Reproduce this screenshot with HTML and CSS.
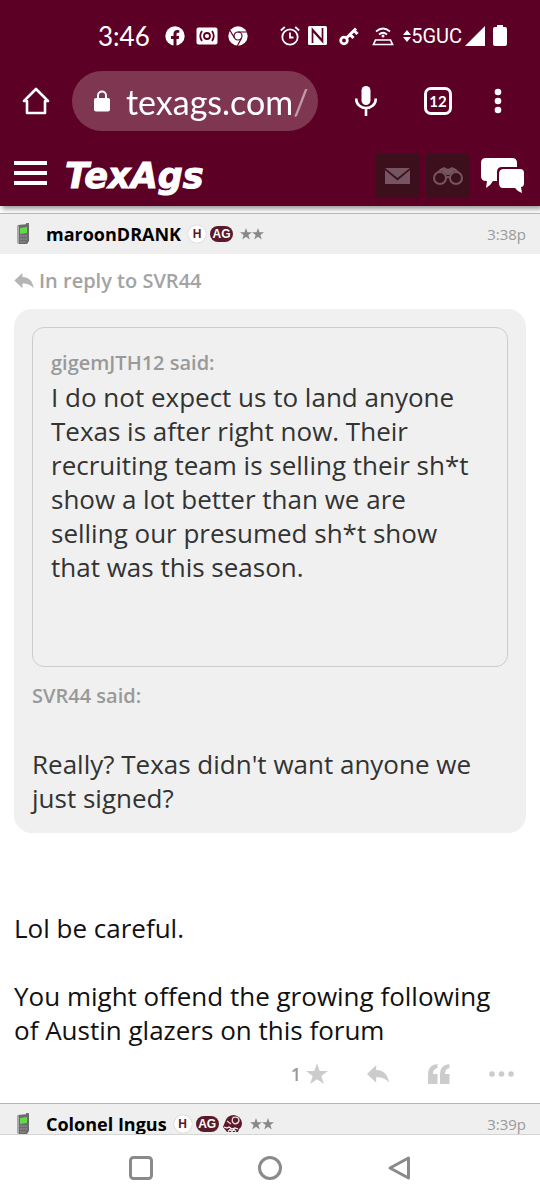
FILE: index.html
```html
<!DOCTYPE html>
<html lang="en">
<head>
	<title>TexAgs</title>
	<meta charset="utf-8">
	<meta name="viewport" content="width=device-width, initial-scale=1">
	<link rel="stylesheet" href="styles.css">
</head>
<body>
	<!-- shared icons -->
	<svg class="defs" width="0" height="0">
		<symbol id="phone" viewBox="0 0 14 24">
			<path d="M10 1h3v6h-3z" fill="#777"/>
			<path d="M2 3l10-1 1 2v15l-2 3H3l-2-2V5z" fill="#6a6a6a"/>
			<path d="M1 5l2-2v19l-2-1z" fill="#aaa"/>
			<path d="M4 6l7-1v6l-7 1z" fill="#62d84a"/>
			<path d="M4 14h7M4 17h7M4 20h6" stroke="#8b8b8b" stroke-width="1.5" stroke-dasharray="2 .6"/>
		</symbol>
		<symbol id="star" viewBox="0 0 24 24">
			<path d="M12 0l2.900 8.700H24l-7.300 5.500L19.500 23 12 17.700 4.500 23l2.800-8.800L0 8.700h9.100z" fill="currentColor"/>
		</symbol>
		<symbol id="reply" viewBox="0 0 24 20">
			<path d="M10 0v5c8 0 13 5 14 14-3-4-7-6-14-6v6L0 9.500z" fill="currentColor"/>
		</symbol>
	</svg>

	<header class="top">
		<div class="status">
			<span class="clock">3:46</span>
			<svg class="fb" width="20" height="20" viewBox="0 0 20 20"><circle cx="10" cy="10" r="9.700" fill="#fff"/><path d="M8.500 20v-7H6v-3h2.500V8c0-2.600 1.500-4 3.800-4l2 .2v2.500H13c-1.200 0-1.500.7-1.500 1.500V10h2.700l-.5 3h-2.200v7z" fill="#5c0025"/></svg>
			<svg class="cast" width="22" height="18" viewBox="0 0 22 18"><rect x=".5" y=".5" width="21" height="17" rx="2" fill="#fff"/><g fill="none" stroke="#5c0025" stroke-width="1.800"><circle cx="11" cy="9" r="3"/><path d="M6 4q-3.500 5 0 10M16 4q3.500 5 0 10"/></g></svg>
			<svg class="chrome" width="20" height="20" viewBox="0 0 20 20"><circle cx="10" cy="10" r="9.700" fill="#fff"/><g fill="none" stroke="#5c0025" stroke-width="1.200"><circle cx="10" cy="10" r="4"/><path d="M10 6h9M6.500 12L2 4.500M13.500 12L9.300 20"/></g></svg>
			<svg class="alarm" width="20" height="20" viewBox="0 0 20 20" fill="none" stroke="#fff" stroke-width="1.800"><circle cx="10" cy="11" r="7.700"/><path d="M10 6.500V11.500h3.500M.8 4.500L4.800 1M19.200 4.500L15.200 1"/></svg>
			<svg class="nfc" width="19" height="19" viewBox="0 0 19 19"><rect width="19" height="19" rx="1.500" fill="#fff"/><path d="M4.500 17V3.500L14 14M14.500 2v13.500L5 5" fill="none" stroke="#5c0025" stroke-width="1.700"/></svg>
			<svg class="key" width="20" height="20" viewBox="0 0 20 20" fill="none" stroke="#fff"><circle cx="5" cy="14.500" r="3.300" stroke-width="2.800"/><path d="M7.500 12L17 2.500M11 8.500l3.500 3.500M15 4.500L18.500 8" stroke-width="3"/></svg>
			<svg class="router" width="22" height="20" viewBox="0 0 22 20" fill="none" stroke="#fff" stroke-width="1.700"><path d="M3.500 14h15l2 4.500h-19zM4 5.500q7-6 14 0M7 8.500q4-3.500 8 0"/><circle cx="11" cy="10" r="1.500" fill="#fff" stroke="none"/></svg>
			<span class="network"><svg width="8" height="12" viewBox="0 0 8 12"><path d="M4 0l4 5H0zM4 12L0 7h8z" fill="#fff"/></svg>5GUC</span>
			<svg class="signal" width="20" height="20" viewBox="0 0 20 20"><path d="M20 0v20H0z" fill="#fff"/></svg>
			<svg class="battery" width="14" height="21" viewBox="0 0 14 21"><path d="M4 0h6v2h2q2 0 2 2v15q0 2-2 2H2q-2 0-2-2V4q0-2 2-2h2z" fill="#fff"/></svg>
		</div>

		<div class="browser">
			<button class="home" aria-label="Home"><svg width="28" height="28" viewBox="0 0 28 28" fill="none" stroke="#fff" stroke-width="2.600" stroke-linejoin="round" stroke-linecap="round"><path d="M2 14L14 2l12 12h-3v12H5V14z"/></svg></button>
			<label class="address">
				<svg width="16" height="22" viewBox="0 0 16 22"><rect y="8" width="16" height="13.500" rx="2" fill="#fff"/><path d="M4 9V5.500a4 4 0 0 1 8 0V9" fill="none" stroke="#fff" stroke-width="2"/></svg>
				<input type="text" value="texags.com/" aria-label="Address">
			</label>
			<button class="mic" aria-label="Voice search"><svg width="22" height="30" viewBox="0 0 22 30"><rect x="6.500" width="9" height="19" rx="4.500" fill="#fff"/><path d="M1.300 12.500v1a9.700 8.500 0 0 0 19.400 0v-1M11 22v8" fill="none" stroke="#fff" stroke-width="2.600"/></svg></button>
			<button class="tabs" aria-label="Open tabs"><span>12</span></button>
			<button class="more" aria-label="Menu"><svg width="8" height="26" viewBox="0 0 8 26" fill="#fff"><circle cx="4" cy="4" r="3.300"/><circle cx="4" cy="13" r="3.300"/><circle cx="4" cy="22" r="3.300"/></svg></button>
		</div>

		<nav class="site">
			<button class="menu" aria-label="Site menu"><i></i><i></i><i></i></button>
			<a class="logo" href="#">TexAgs</a>
			<button class="tile" aria-label="Messages"><svg width="26" height="18" viewBox="0 0 26 18" fill="#765461"><path d="M0 1h25L12.500 11z"/><path d="M0 3l12.500 10.500L25 3v14H0z"/></svg></button>
			<button class="tile" aria-label="Watched"><svg width="30" height="20" viewBox="0 0 30 20" fill="none" stroke="#765461" stroke-width="2"><circle cx="7" cy="12" r="6"/><circle cx="23" cy="12" r="6"/><path d="M13 12q2-2 4 0"/><path d="M3 7l4-4 4-2 4 2 4-2 4 2 4 4-6-2-5 4h-2L9 5z" fill="#765461" stroke="none"/></svg></button>
			<button class="chat" aria-label="Forums"><svg width="44" height="36" viewBox="0 0 44 36" fill="#fff"><path d="M5 0h26q5 0 5 5v4H21q-5 0-5 5v9h-4q-2 4-7 7l1-7H5q-5 0-5-5V5q0-5 5-5z"/><path d="M23 11h16q4 0 4 4v10q0 4-3 4l1 6q-5-2-7-5H22q-4 0-4-5v-9q0-5 5-5z"/></svg></button>
		</nav>
	</header>

	<main>
		<article class="post">
			<div class="posthead">
				<svg class="device" width="14" height="24"><use href="#phone"/></svg>
				<a class="user" href="#">maroonDRANK</a>
				<span class="badge h">H</span>
				<span class="badge ag">AG</span>
				<span class="stars"><svg width="12" height="12"><use href="#star"/></svg><svg width="12" height="12"><use href="#star"/></svg></span>
				<time>3:38p</time>
			</div>
			<div class="content">
				<a class="inreply" href="#"><svg width="20" height="16"><use href="#reply"/></svg>In reply to SVR44</a>
				<blockquote class="quote">
					<blockquote class="inner">
						<cite>gigemJTH12 said:</cite>
						<p>I do not expect us to land anyone Texas is after right now. Their recruiting team is selling their sh*t show a lot better than we are selling our presumed sh*t show that was this season.</p>
					</blockquote>
					<cite>SVR44 said:</cite>
					<p class="answer">Really? Texas didn't want anyone we just signed?</p>
				</blockquote>
				<div class="message">
					<p>Lol be careful.</p>
					<p>You might offend the growing following of Austin glazers on this forum</p>
				</div>
			</div>
			<div class="actions">
				<button class="like">1<svg width="22" height="22"><use href="#star"/></svg></button>
				<button aria-label="Reply"><svg width="22" height="19"><use href="#reply"/></svg></button>
				<button aria-label="Quote"><svg width="22" height="20" viewBox="0 0 22 20" fill="currentColor"><path d="M9.500 0v4Q5 5 5 10h4.500v10H0V10Q0 1 9.500 0zM21.500 0v4Q17 5 17 10h4.500v10H12V10Q12 1 21.500 0z"/></svg></button>
				<button aria-label="More"><svg width="26" height="6" viewBox="0 0 26 6" fill="currentColor"><circle cx="3" cy="3" r="2.800"/><circle cx="12.500" cy="3" r="2.800"/><circle cx="22" cy="3" r="2.800"/></svg></button>
			</div>
		</article>

		<article class="post next">
			<div class="posthead">
				<svg class="device" width="14" height="24"><use href="#phone"/></svg>
				<a class="user" href="#">Colonel Ingus</a>
				<span class="badge h">H</span>
				<span class="badge ag">AG</span>
				<svg class="ring" width="20" height="18" viewBox="0 0 20 18"><path d="M2 7Q4 0 11 0q7 1 8 8 0 4-3 6l-1 3H4l-4-5z" fill="#5a1a28"/><path d="M10 2.500q6-1.500 6 3-1 4-5 3-3-2-1-6M4 6l4 3" fill="none" stroke="#e6d3d6" stroke-width="1.400"/><path d="M1 12l3 1 2-1 3 2 3-1 3 1M5 16.500l2-2 2 2 2-2 2 2" fill="none" stroke="#fff" stroke-width="1.200"/></svg>
				<span class="stars"><svg width="12" height="12"><use href="#star"/></svg><svg width="12" height="12"><use href="#star"/></svg></span>
				<time>3:39p</time>
			</div>
		</article>
	</main>

	<footer class="sysnav">
		<button aria-label="Recent apps"><svg width="26" height="26" viewBox="0 0 26 26" fill="none" stroke="#8a8a8a" stroke-width="3"><rect x="2.500" y="2.500" width="21" height="21" rx="3"/></svg></button>
		<button aria-label="Home screen"><svg width="26" height="26" viewBox="0 0 26 26" fill="none" stroke="#8a8a8a" stroke-width="3"><circle cx="13" cy="13" r="10.500"/></svg></button>
		<button aria-label="Back"><svg width="26" height="26" viewBox="0 0 26 26" fill="none" stroke="#8a8a8a" stroke-width="3" stroke-linejoin="round"><path d="M22.500 3v20L4 13z"/></svg></button>
	</footer>
</body>
</html>
```
FILE: styles.css
```css
*{
	margin:0;
	padding:0;
	box-sizing:border-box;
}
body{
	display:flex;
	flex-direction:column;
	min-height:100vh;
	background:#fff;
	color:#111;
	font-family:"Open Sans","Noto Sans",sans-serif;
	font-size:26px;
	line-height:34px;
}
a{
	color:inherit;
	text-decoration:none;
}
button{
	display:flex;
	align-items:center;
	justify-content:center;
	border:none;
	background:none;
	color:inherit;
	font:inherit;
	cursor:pointer;
}
svg{
	display:block;
	flex:none;
}
.defs{
	position:absolute;
}

/* top bars */
.top{
	background:#5c0025;
	color:#fff;
	box-shadow:2px 3px 5px rgba(0,0,0,0.4);
}
.status{
	display:flex;
	align-items:center;
	height:71px;
	padding:0 33px 0 98px;
}
.clock{
	font-family:Lato,sans-serif;
	font-size:26px;
	margin-right:auto;
}
.fb{
	margin-right:11px;
}
.cast{
	margin-right:10px;
}
.chrome{
	margin-right:32px;
}
.alarm{
	margin-right:8px;
}
.nfc{
	margin-right:12px;
}
.key{
	margin-right:13px;
}
.router{
	margin-right:9px;
}
.network{
	display:flex;
	align-items:center;
	font-family:Roboto,sans-serif;
	font-size:20px;
}
.signal{
	margin:0 8px 0 3px;
}
.browser{
	display:flex;
	height:60px;
	padding-right:18px;
}
.home,.mic,.tabs{
	width:72px;
}
.more{
	width:48px;
}
.address{
	display:flex;
	flex:1;
	align-items:center;
	gap:16px;
	min-width:0;
	margin-right:12px;
	padding:0 10px 0 22px;
	border-radius:30px;
	background:#7f3651;
}
.address input{
	flex:1;
	min-width:0;
	height:60px;
	border:none;
	outline:none;
	background:none;
	color:#fff;
	font-family:Lato,sans-serif;
	font-size:34px;
	-webkit-mask-image:linear-gradient(to left,rgba(0,0,0,0.5) 12px,#000 18px);
	mask-image:linear-gradient(to left,rgba(0,0,0,0.5) 12px,#000 18px);
}
.tabs span{
	width:28px;
	height:28px;
	border:3px solid #fff;
	border-radius:7px;
	font-family:Lato,sans-serif;
	font-size:15px;
	font-weight:700;
	line-height:22px;
}
.site{
	display:flex;
	align-items:center;
	height:75px;
	padding:14px 15px 0 14px;
}
.menu{
	flex-direction:column;
	gap:6px;
	width:33px;
	padding-bottom:6px;
}
.menu i{
	width:100%;
	height:4px;
	background:#fff;
}
.logo{
	margin:0 auto 0 18px;
	font-family:"DejaVu Sans",sans-serif;
	font-size:35px;
	font-style:italic;
	font-weight:700;
	-webkit-text-stroke:1px #fff;
}
.tile{
	width:44px;
	height:44px;
	margin-right:6px;
	background:#3b0f1b;
}
.chat{
	margin-left:5px;
}

/* posts */
.post{
	margin-top:7px;
}
.posthead{
	display:flex;
	align-items:center;
	height:41px;
	padding:0 14px 0 16px;
	border-top:1px solid #b5b5b5;
	background:#efefef;
}
.device{
	margin-right:16px;
}
.user{
	margin-right:7px;
	color:#000;
	font-size:18px;
	font-weight:700;
}
.badge{
	margin-right:4px;
	height:18px;
	border-radius:9px;
	font-family:"Liberation Sans",sans-serif;
	font-size:12px;
	font-weight:700;
	line-height:18px;
	text-align:center;
}
.h{
	width:18px;
	background:#fff;
	color:#5a1a28;
	box-shadow:0 0 1px #999;
}
.ag{
	width:23px;
	height:16px;
	background:#5a1a28;
	color:#fff;
	line-height:16px;
}
.ring{
	margin-right:4px;
}
.stars{
	display:flex;
	margin-left:3px;
	color:#888;
}
time{
	margin-left:auto;
	color:#999;
	font-size:15px;
}
.content{
	padding:10px 14px 0;
}
.inreply,cite{
	color:#999;
	font-size:20px;
	font-style:normal;
	font-weight:600;
}
.inreply{
	display:flex;
	align-items:center;
	gap:5px;
	color:#a3a3a3;
}
.inreply svg{
	color:#b5b5b5;
}
.quote{
	margin-top:11px;
	padding:18px;
	border-radius:18px;
	background:#f0f0f0;
	color:#333;
}
.inner{
	margin-bottom:12px;
	padding:18px 18px 82px;
	border:1px solid #ccc;
	border-radius:12px;
}
cite{
	display:block;
}
.answer{
	margin-top:34px;
}
.message{
	display:flex;
	flex-direction:column;
	gap:34px;
	margin-top:78px;
	padding-right:14px;
}
.actions{
	display:flex;
	align-items:center;
	justify-content:flex-end;
	gap:39px;
	height:56px;
	padding:0 25px 2px 0;
	color:#ccc;
}
.like{
	gap:5px;
	color:#999;
	font-size:18px;
	font-weight:600;
}
.like svg{
	color:#ccc;
}
.next{
	height:31px;
	margin-top:0;
	overflow:hidden;
}
.sysnav{
	display:flex;
	align-items:center;
	justify-content:center;
	gap:103px;
	height:66px;
	border-top:1px solid #d5d5d5;
	background:#fff;
}
```
